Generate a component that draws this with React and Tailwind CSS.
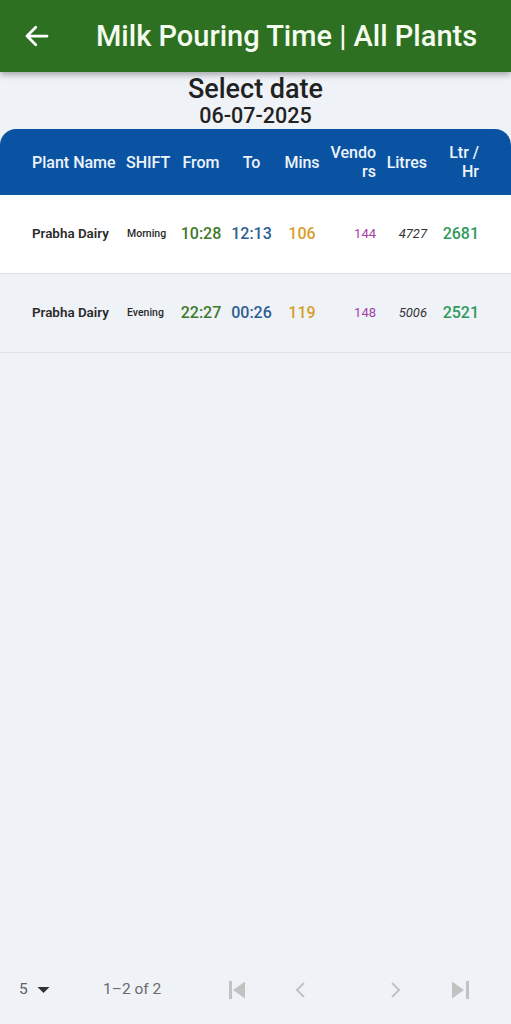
import React from "react";

const rows = [
  { name: "Prabha Dairy", shift: "Morning", from: "10:28", to: "12:13", mins: "106", vendors: "144", litres: "4727", lph: "2681", bg: "bg-white" },
  { name: "Prabha Dairy", shift: "Evening", from: "22:27", to: "00:26", mins: "119", vendors: "148", litres: "5006", lph: "2521", bg: "bg-[#eff2f7]" },
];

export default function App() {
  return (
    <div className="flex h-[1024px] w-[511px] flex-col bg-[#eff2f7] font-['Roboto',sans-serif]">
      <header className="relative z-10 flex h-[72px] shrink-0 items-center bg-[#2e7021] shadow-[0_3px_6px_rgba(0,0,0,0.3)]">
        <svg className="ml-[22px]" width="30" height="30" viewBox="0 0 24 24" fill="none" stroke="#ffffff" strokeWidth="2.2" strokeLinecap="round" strokeLinejoin="round">
          <path d="M20 12H4M11 5l-7 7 7 7" />
        </svg>
        <h1 className="ml-[44px] text-[29px] font-medium leading-none text-[#f4fbef]">Milk Pouring Time | All Plants</h1>
      </header>

      <div className="flex flex-col items-center pt-[2px] text-[#222]">
        <div className="text-[27px] font-medium leading-[30px]">Select date</div>
        <div className="text-[21.5px] font-medium leading-[24px]">06-07-2025</div>
      </div>

      <div className="mt-[1px] flex h-[66px] items-center rounded-t-[16px] bg-[#0a53a3] pl-[32px] text-[16px] font-medium leading-[19px] text-[#eef3fb]">
        <div className="w-[90px]">Plant Name</div>
        <div className="w-[54px] pl-[4px]">SHIFT</div>
        <div className="w-[50px] text-center">From</div>
        <div className="w-[51px] text-center">To</div>
        <div className="w-[50px] text-center">Mins</div>
        <div className="w-[49px] text-right">Vendo<br />rs</div>
        <div className="w-[51px] text-right">Litres</div>
        <div className="w-[52px] text-right">Ltr /<br />Hr</div>
      </div>

      {rows.map((r, i) => (
        <div key={i} className={`flex h-[79px] items-center border-b border-[#dcdfe4] pl-[32px] ${r.bg}`}>
          <div className="w-[90px] text-[13.4px] font-semibold text-[#2b2b2b]">{r.name}</div>
          <div className="w-[54px] pl-[5px] text-[10.5px] font-medium text-[#2b2b2b]">{r.shift}</div>
          <div className="w-[50px] text-center text-[16px] font-medium text-[#3f7a2c]">{r.from}</div>
          <div className="w-[51px] text-center text-[16px] font-medium text-[#2c5f92]">{r.to}</div>
          <div className="w-[50px] text-center text-[16px] font-medium text-[#d89e2c]">{r.mins}</div>
          <div className="w-[49px] text-right text-[13px] text-[#a43fa8]">{r.vendors}</div>
          <div className="w-[51px] text-right text-[13px] italic text-[#333]">{r.litres}</div>
          <div className="w-[52px] text-right text-[16px] font-medium text-[#2f9a5c]">{r.lph}</div>
        </div>
      ))}

      <div className="flex-1" />

      <div className="mb-[8px] flex h-[52px] items-center pl-[19px] text-[15.5px] text-[#5f5f5f]">
        <div className="flex w-[84px] items-center">
          <span>5</span>
          <svg className="ml-[9px]" width="13" height="8" viewBox="0 0 13 8" fill="#333">
            <path d="M0.5 1h12L6.5 7z" />
          </svg>
        </div>
        <div className="w-[126px] text-[#6a6a6a]">1–2 of 2</div>
        <svg width="16" height="18" viewBox="0 0 16 18" fill="#c2c2c2">
          <rect x="0" y="0" width="3" height="18" />
          <path d="M16 0.5v17L4 9z" />
        </svg>
        <svg className="ml-[50px]" width="10" height="16" viewBox="0 0 10 16" fill="none" stroke="#c2c2c2" strokeWidth="2">
          <path d="M9 1L2 8l7 7" />
        </svg>
        <svg className="ml-[86px]" width="10" height="16" viewBox="0 0 10 16" fill="none" stroke="#c2c2c2" strokeWidth="2">
          <path d="M1 1l7 7-7 7" />
        </svg>
        <svg className="ml-[51px]" width="17" height="18" viewBox="0 0 17 18" fill="#c2c2c2">
          <path d="M0 0.5v17L12 9z" />
          <rect x="14" y="0" width="3" height="18" />
        </svg>
      </div>
    </div>
  );
}
